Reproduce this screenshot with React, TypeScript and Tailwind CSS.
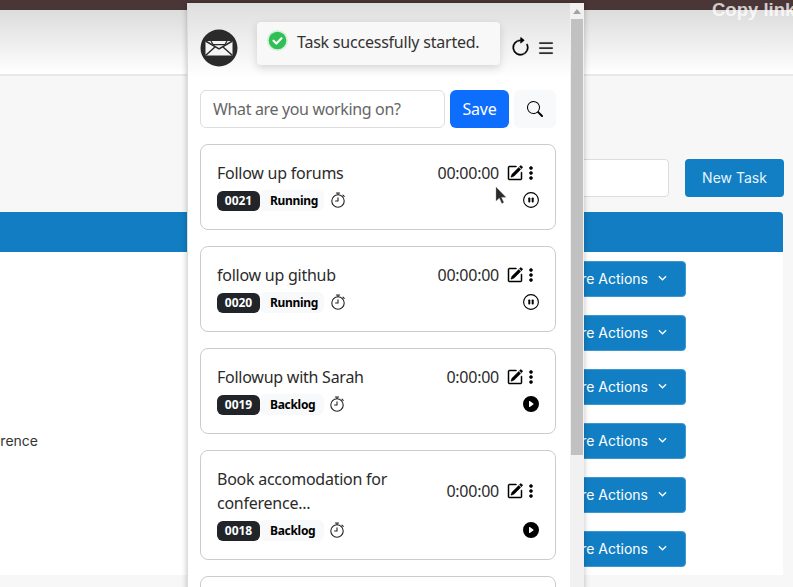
import { BsArrowClockwise, BsList, BsPencilSquare, BsPlayCircleFill, BsSearch, BsThreeDotsVertical } from 'react-icons/bs';

const tasks = [
  { id: '0021', title: 'Follow up forums', time: '00:00:00', status: 'Running' },
  { id: '0020', title: 'follow up github', time: '00:00:00', status: 'Running' },
  { id: '0019', title: 'Followup with Sarah', time: '0:00:00', status: 'Backlog' },
  { id: '0018', title: 'Book accomodation for conference...', time: '0:00:00', status: 'Backlog' },
];

function Logo() {
  return (
    <svg viewBox="0 0 38 38" className="w-[38px] h-[38px] shrink-0">
      <circle cx="19" cy="19" r="18.5" fill="#2a2a2a" />
      <path d="M5.5 12h27v14.5h-27z" fill="#f4f4f4" />
      <path d="M5.5 12l13.5 8 13.5-8M5.5 26.5l9.5-8.5M32.5 26.5L23 18" fill="none" stroke="#2a2a2a" strokeWidth="1.5" />
      <path d="M11 12l2 3.6h12l2-3.6" fill="none" stroke="#2a2a2a" strokeWidth="1.2" />
    </svg>
  );
}

function Stopwatch() {
  return (
    <svg viewBox="0 0 16 16" className="w-4 h-4" fill="none" stroke="#222" strokeWidth="1.1" strokeLinecap="round">
      <circle cx="8" cy="9" r="6.2" />
      <path d="M8 5.8V9H5.6M6.4 1h3.2M8 1v1.6M13 3.2l1.2 1.2" />
    </svg>
  );
}

function PauseCircle() {
  return (
    <svg viewBox="0 0 16 16" className="w-4 h-4" fill="none">
      <circle cx="8" cy="8" r="7.4" stroke="#000" strokeWidth="1.1" />
      <rect x="5.3" y="5.4" width="2" height="5.2" rx="0.8" fill="#000" />
      <rect x="8.7" y="5.4" width="2" height="5.2" rx="0.8" fill="#000" />
    </svg>
  );
}

function TaskCard({ task }: { task: (typeof tasks)[number] }) {
  const long = task.title.length > 24;
  return (
    <div className={`border border-[#ccc] rounded-lg bg-white pl-4 pr-4 pt-4 ${long ? 'h-[110px]' : 'h-[86px]'}`}>
      <div className="flex items-center justify-between tracking-[-0.25px]">
        <div className={`text-[16px] leading-[24px] text-[#2b2b2b] ${long ? 'w-[190px]' : ''}`}>{task.title}</div>
        <div className="flex items-center">
          <span className="text-[16px] leading-[24px] text-[#2b2b2b]">{task.time}</span>
          <BsPencilSquare className="ml-2 w-4 h-4 text-black stroke-[0.5px]" />
          <BsThreeDotsVertical className="w-4 h-4 text-black stroke-[0.6px]" />
        </div>
      </div>
      <div className="flex items-center justify-between mt-[5px]">
        <div className="flex items-center">
          <span className="bg-[#212529] text-white text-[12px] font-bold rounded-[6px] w-[43px] h-[20px] flex items-center justify-center">{task.id}</span>
          <span className="bg-[#f8f9fa] text-black text-[12px] font-bold tracking-[-0.3px] rounded-[6px] w-[64px] h-[21px] flex items-center pl-[10px]">{task.status}</span>
          <span className={`-mt-[2px] ${task.status === 'Backlog' ? 'ml-[5px]' : 'ml-[6px]'}`}><Stopwatch /></span>
        </div>
        <div className="-mt-[1px]">
          {task.status === 'Running' ? <PauseCircle /> : <BsPlayCircleFill className="w-4 h-4 text-black" />}
        </div>
      </div>
    </div>
  );
}

export default function App() {
  return (
    <div className="relative w-[793px] h-[587px] overflow-hidden bg-[#f7f7f7] font-['Inter',sans-serif]">
      {/* page behind the popup */}
      <div className="h-[10px] bg-[#4a3636]" />
      <div className="h-[66px] bg-gradient-to-b from-[#dcdcdc] to-white border-b-2 border-[#e8e8e8]" />
      <div className="pt-[83px]">
        <div className="flex justify-end gap-4 pr-[9px]">
          <div className="w-[200px] h-[38px] bg-white border border-[#ddd] rounded" />
          <div className="w-[99px] h-[38px] pb-[2px] bg-[#127fc4] text-[#e6f3fb] rounded flex items-center justify-center text-[14px]">New Task</div>
        </div>
        <div className="mt-[15px] mr-[10px] h-[40px] bg-[#127dc2] rounded-tr" />
        <div className="mr-[10px] h-[323px] bg-white pt-[9px] flex flex-col gap-[18px]">
          {[0, 1, 2, 3, 4, 5].map((i) => (
            <div key={i} className="flex items-center h-[36px] pr-[97px]">
              <div className="w-[38px] pb-[2px] flex justify-end overflow-hidden whitespace-nowrap text-[14px] text-[#333]">
                {i === 3 ? 'rence' : ''}
              </div>
              <div className="ml-auto w-[170px] h-[36px] pb-[2px] bg-[#127fc4] border border-[#3f97d0] rounded text-white text-[14px] flex items-center justify-end pr-[18px] gap-[10px]">
                More Actions
                <svg viewBox="0 0 10 6" className="w-[9px] h-[6px]" fill="none" stroke="#fff" strokeWidth="1.4">
                  <path d="M1 1l4 4 4-4" />
                </svg>
              </div>
            </div>
          ))}
        </div>
      </div>
      <div className="absolute left-[712px] top-0 text-[18.5px] leading-[20px] font-bold text-white/75 whitespace-nowrap font-['Liberation_Sans',sans-serif]">Copy link</div>

      {/* popup */}
      <div className="absolute left-[187px] top-[3px] w-[397px] h-[620px] flex bg-white border-l border-[#ddd] shadow-[0_0_6px_rgba(0,0,0,0.25)] font-['Noto_Sans',sans-serif]">
        <div className="flex-1 bg-gradient-to-b from-[#dedede] via-white via-[12%] to-white pl-3 pr-[14px]">
          <div className="flex items-center h-[87px] pt-[2px]">
            <Logo />
            <div className="ml-auto flex items-center gap-[5px]">
              <BsArrowClockwise className="w-[21px] h-[21px] text-black stroke-[0.3px]" />
              <BsList className="w-5 h-5 text-black stroke-[0.2px]" />
            </div>
          </div>
          <div className="flex items-center gap-[5px]">
            <div className="w-[245px] h-[38px] bg-white border border-[#ddd] rounded-md pl-3 flex items-center text-[16px] tracking-[-0.35px] text-[#666]">What are you working on?</div>
            <div className="w-[59px] h-[38px] bg-[#0d6efd] text-white rounded-md flex items-center justify-center text-[16px] tracking-[-0.25px]">Save</div>
            <div className="w-[42px] h-[38px] bg-[#f8f9fa] rounded-md flex items-center justify-center">
              <BsSearch className="w-4 h-4 text-black" />
            </div>
          </div>
          <div className="mt-[16px] flex flex-col gap-4">
            {tasks.map((t) => (
              <TaskCard key={t.id} task={t} />
            ))}
            <div className="h-[60px] border border-[#ccc] rounded-lg bg-white" />
          </div>
        </div>
        <div className="w-[14px] bg-[#f1f1f1] shrink-0 flex flex-col items-center">
          <svg viewBox="0 0 8 5" className="w-2 h-[5px] mt-[6px]"><path d="M4 0l4 5H0z" fill="#a3a3a3" /></svg>
          <div className="w-[12px] h-[436px] bg-[#c1c1c1] mt-[5px]" />
        </div>
      </div>

      {/* toast */}
      <div className="absolute left-[257px] top-[22px] w-[243px] h-[43px] bg-[#f8f8f8] rounded shadow-[0_3px_8px_rgba(0,0,0,0.15)] flex items-start pt-[8px] pl-[10px] gap-[9px] text-[16px] tracking-[-0.22px] text-[#333] font-['Noto_Sans',sans-serif]">
        <svg viewBox="0 0 22 22" className="w-[21px] h-[21px] shrink-0">
          <circle cx="11" cy="11" r="11" fill="#d3f0da" />
          <circle cx="11" cy="11" r="9.2" fill="#2fbf55" />
          <path d="M6.8 11.2l3 3 5.4-5.6" fill="none" stroke="#fff" strokeWidth="2.2" strokeLinecap="round" strokeLinejoin="round" />
        </svg>
        <span className="whitespace-nowrap">Task successfully started.</span>
      </div>

      {/* mouse pointer */}
      <svg viewBox="0 0 12 18" className="absolute left-[495px] top-[187px] w-[12px] h-[18px]">
        <path d="M1 0v14l3.4-3 2.4 5.4 2-.9-2.4-5.2H11z" fill="#2b2b2b" stroke="#999" strokeWidth="0.4" />
      </svg>
    </div>
  );
}
